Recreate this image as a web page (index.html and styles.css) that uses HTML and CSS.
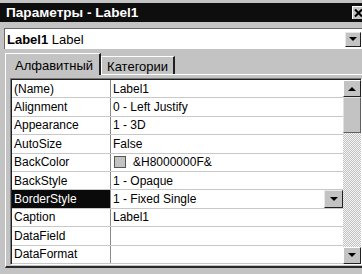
FILE: index.html
```html
<!DOCTYPE html>
<html>
<head>
<meta charset="utf-8">
<link rel="stylesheet" href="styles.css">
</head>
<body>
<div class="window">
  <div class="titlebar">
    <span class="title">Параметры - Label1</span>
    <span class="closebtn"><svg width="10" height="9" viewBox="0 0 10 9"><path d="M1 0.5 L8 7.5 M8 0.5 L1 7.5" stroke="#000" stroke-width="2"/></svg></span>
  </div>
  <div class="objcombo">
    <span class="objtext"><b>Label1</b> Label</span>
    <span class="ddbtn"><span class="arrow"></span></span>
  </div>
  <div class="tabs">
    <div class="tab active">Алфавитный</div>
    <div class="tab">Категории</div>
  </div>
  <div class="panel">
    <div class="gridbox">
      <div class="grid">
        <div class="rows">
          <div class="row"><div class="name">(Name)</div><div class="val">Label1</div></div>
          <div class="row"><div class="name">Alignment</div><div class="val">0 - Left Justify</div></div>
          <div class="row"><div class="name">Appearance</div><div class="val">1 - 3D</div></div>
          <div class="row"><div class="name">AutoSize</div><div class="val">False</div></div>
          <div class="row"><div class="name">BackColor</div><div class="val"><span class="swatch"></span>&amp;H8000000F&amp;</div></div>
          <div class="row"><div class="name">BackStyle</div><div class="val">1 - Opaque</div></div>
          <div class="row sel"><div class="name">BorderStyle</div><div class="val">1 - Fixed Single<span class="ddbtn cell"><span class="arrow"></span></span></div></div>
          <div class="row"><div class="name">Caption</div><div class="val">Label1</div></div>
          <div class="row"><div class="name">DataField</div><div class="val"></div></div>
          <div class="row"><div class="name">DataFormat</div><div class="val"></div></div>
        </div>
        <div class="scrollbar">
          <div class="sbtn"><span class="arrow up"></span></div>
          <div class="thumb"></div>
          <div class="track"></div>
          <div class="sbtn"><span class="arrow"></span></div>
        </div>
      </div>
    </div>
  </div>
</div>
</body>
</html>
```
FILE: styles.css
```css
html, body {
  margin: 0;
  padding: 0;
  background: #c3c3c3;
}
.window {
  width: 362px;
  height: 274px;
  overflow: hidden;
  background: #c3c3c3;
  font-family: "Liberation Sans", Arial, sans-serif;
  font-size: 12px;
  color: #000;
  padding-top: 3px;
  box-sizing: border-box;
}
.titlebar {
  height: 19px;
  background: #0e0e0e;
  display: flex;
  align-items: center;
  justify-content: space-between;
  padding-left: 6px;
}
.title {
  color: #fff;
  font-weight: bold;
  font-size: 13.6px;
}
.closebtn {
  width: 16px;
  height: 13px;
  margin-right: -6px;
  background: #c3c3c3;
  border-top: 1px solid #fff;
  border-left: 1px solid #fff;
  box-sizing: border-box;
  display: flex;
  align-items: center;
  padding-left: 1px;
}
.objcombo {
  margin: 6px 0 0 4px;
  height: 21px;
  background: #fff;
  border-top: 1px solid #6a6a6a;
  border-left: 1px solid #6a6a6a;
  box-sizing: border-box;
  display: flex;
  align-items: center;
  justify-content: space-between;
  padding: 0 1px 0 2px;
}
.objtext { font-size: 13px; }
.ddbtn {
  width: 16px;
  height: 15px;
  background: #c3c3c3;
  border-top: 1px solid #e8e8e8;
  border-left: 1px solid #e8e8e8;
  border-right: 1px solid #202020;
  border-bottom: 1px solid #202020;
  box-sizing: border-box;
  display: flex;
  align-items: center;
  justify-content: center;
}
.arrow {
  width: 0;
  height: 0;
  border-left: 4px solid transparent;
  border-right: 4px solid transparent;
  border-top: 4px solid #000;
}
.arrow.up {
  border-top: none;
  border-bottom: 4px solid #000;
}
.tabs {
  display: flex;
  align-items: flex-end;
  padding-left: 5px;
  margin-top: 4px;
  height: 21px;
}
.tab {
  height: 18px;
  box-sizing: border-box;
  border-top: 1px solid #fff;
  border-left: 1px solid #fff;
  border-right: 2px solid #202020;
  padding: 2px 5px 0 5px;
  font-size: 13px;
}
.tab.active {
  height: 22px;
  margin-bottom: -1px;
  background: #c3c3c3;
  position: relative;
  z-index: 1;
  padding: 4px 6px 0 9px;
  font-size: 13px;
}
.panel {
  margin-left: 5px;
  margin-right: -4px;
  border-top: 1px solid #fff;
  border-left: 1px solid #fff;
  border-bottom: 2px solid #2a2a2a;
  padding: 3px 3px 1px 4px;
}
.gridbox {
  border-top: 1px solid #7a7a7a;
  border-left: 1px solid #7a7a7a;
  border-right: 1px solid #fff;
  border-bottom: 1px solid #fff;
  width: 350px;
}
.grid {
  border-top: 1px solid #202020;
  border-left: 1px solid #202020;
  display: flex;
  background: #fff;
}
.rows {
  flex: 1;
}
.row {
  display: flex;
  height: 18.4px;
  box-sizing: border-box;
  border-bottom: 1px solid #c8c8c8;
}
.name {
  width: 99px;
  flex: none;
  box-sizing: border-box;
  border-right: 1px solid #8a8a8a;
  padding-left: 2px;
  display: flex;
  align-items: center;
}
.val {
  flex: 1;
  padding-left: 2px;
  display: flex;
  align-items: center;
}
.row.sel .name {
  background: #0a0a0a;
  color: #fff;
}
.row.sel .val {
  justify-content: space-between;
}
.ddbtn.cell {
  width: 19px;
  height: 18px;
  margin-top: -1px;
}
.swatch {
  width: 10px;
  height: 10px;
  background: #c3c3c3;
  border: 1px solid #555;
  margin: 0 7px 0 1px;
}
.scrollbar {
  width: 18px;
  display: flex;
  flex-direction: column;
}
.sbtn {
  height: 17px;
  background: #c3c3c3;
  border-top: 1px solid #fff;
  border-left: 1px solid #fff;
  border-right: 1px solid #202020;
  border-bottom: 1px solid #202020;
  box-sizing: border-box;
  display: flex;
  align-items: center;
  justify-content: center;
  flex: none;
}
.thumb {
  height: 36px;
  background: #c3c3c3;
  border-top: 1px solid #e0e0e0;
  border-left: 1px solid #e0e0e0;
  border-right: 1px solid #606060;
  border-bottom: 1px solid #606060;
  box-sizing: border-box;
  flex: none;
}
.track {
  flex: 1;
  background-color: #e4e4e4;
  background-image: repeating-conic-gradient(#c3c3c3 0 25%, #f4f4f4 0 50%);
  background-size: 2px 2px;
}
```
